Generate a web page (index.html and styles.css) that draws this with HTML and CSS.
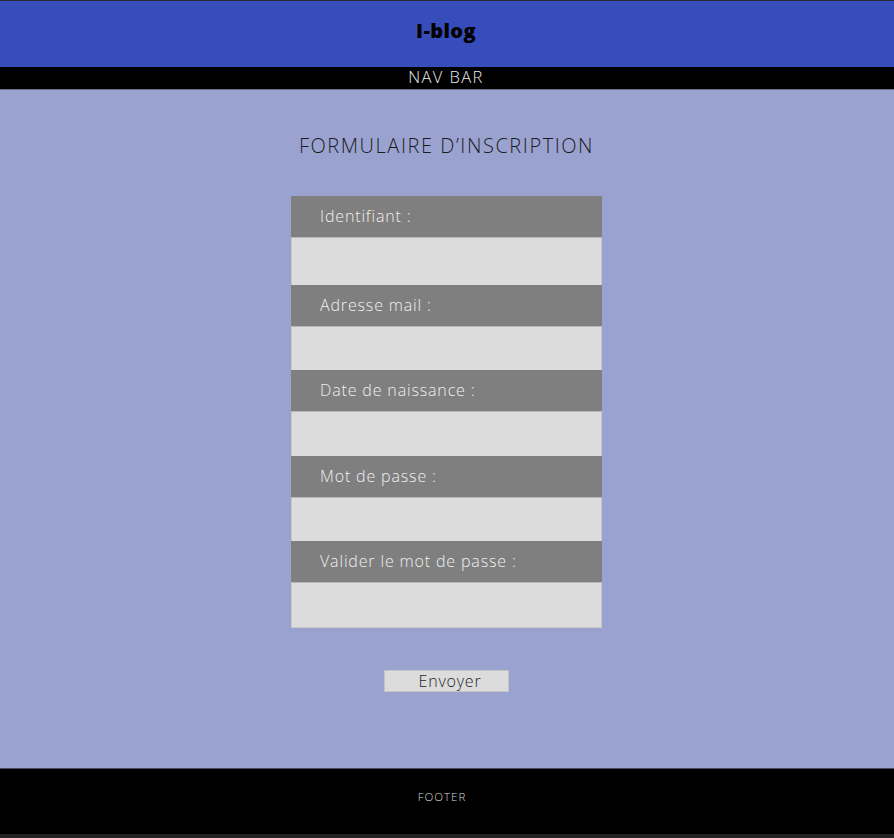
FILE: index.html
```html
<!DOCTYPE html>
<html lang="fr">
<head>
<meta charset="utf-8">
<title>I-blog</title>
<link rel="stylesheet" href="styles.css">
</head>
<body>
<header class="site-header">
  <h1 class="logo">I-blog</h1>
</header>
<nav class="navbar">NAV BAR</nav>
<main class="main">
  <h2 class="title">FORMULAIRE D’INSCRIPTION</h2>
  <form class="form">
    <div class="fields">
      <div class="field field-first">
        <label class="label">Identifiant :</label>
        <div class="input"></div>
      </div>
      <div class="field">
        <label class="label">Adresse mail :</label>
        <div class="input"></div>
      </div>
      <div class="field field-third">
        <label class="label">Date de naissance :</label>
        <div class="input"></div>
      </div>
      <div class="field field-fourth">
        <label class="label">Mot de passe :</label>
        <div class="input"></div>
      </div>
      <div class="field field-last">
        <label class="label">Valider le mot de passe :</label>
        <div class="input"></div>
      </div>
    </div>
    <button type="button" class="submit">Envoyer</button>
  </form>
</main>
<footer class="footer">FOOTER</footer>
<div class="bottom"></div>
</body>
</html>
```
FILE: styles.css
```css
* { box-sizing: border-box; }
html, body { margin: 0; padding: 0; }
body {
  font-family: "Open Sans", "Liberation Sans", sans-serif;
  font-weight: 300;
  background: #9aa3cf;
  border-top: 1px solid #262a33;
}
.site-header {
  height: 66px;
  background: #364dbb;
  display: flex;
  align-items: center;
  justify-content: center;
  padding: 0 2px 8px 0;
}
.logo {
  margin: 0;
  font-size: 20px;
  font-weight: 800;
  color: #000;
  letter-spacing: 0.4px;
}
.navbar {
  height: 22px;
  background: #000;
  color: #ececec;
  font-size: 16.5px;
  letter-spacing: 1.4px;
  line-height: 20px;
  text-align: center;
  padding-right: 2px;
  border-bottom: 1px solid #6c7085;
  box-sizing: content-box;
}
.main {
  height: 678px;
  display: flex;
  flex-direction: column;
  align-items: center;
  padding-right: 1px;
}
.title {
  margin: 43px 0 0;
  font-size: 20px;
  font-weight: 300;
  color: #1a1c24;
  letter-spacing: 1.55px;
  line-height: 26px;
}
.form {
  margin-top: 37px;
  display: flex;
  flex-direction: column;
  align-items: center;
}
.fields {
  width: 311px;
  display: flex;
  flex-direction: column;
}
.field { display: flex; flex-direction: column; }
.label {
  height: 41px;
  background: #7f7f7f;
  color: #f0f0f0;
  font-size: 16px;
  letter-spacing: 0.85px;
  line-height: 40px;
  padding-left: 29px;
}
.input {
  height: 44px;
  background: #dcdcdc;
  border-top: 1px solid #b8b8b8;
  border-left: 1px solid #c8c8c8;
  border-right: 1px solid #c8c8c8;
}
.field-first .input { height: 48px; }
.field-third .input { height: 45px; }
.field-fourth .input { height: 44px; }
.field-last .input { height: 46px; border-bottom: 1px solid #c8c8c8; }
.submit {
  margin-top: 42px;
  width: 125px;
  height: 22px;
  padding: 0 0 0 7px;
  background: #dcdcdc;
  border: 1px solid #c4c4c4;
  font-family: inherit;
  font-weight: 300;
  font-size: 16px;
  letter-spacing: 0.8px;
  color: #1e1e1e;
  line-height: 18px;
}
.footer {
  height: 66px;
  background: #000;
  color: #d8d8d8;
  font-size: 11.5px;
  letter-spacing: 1px;
  display: flex;
  align-items: center;
  justify-content: center;
  padding: 0 10px 10px 0;
  border-top: 1px solid #4a4d66;
}
.bottom {
  height: 4px;
  background: #222;
}
```
